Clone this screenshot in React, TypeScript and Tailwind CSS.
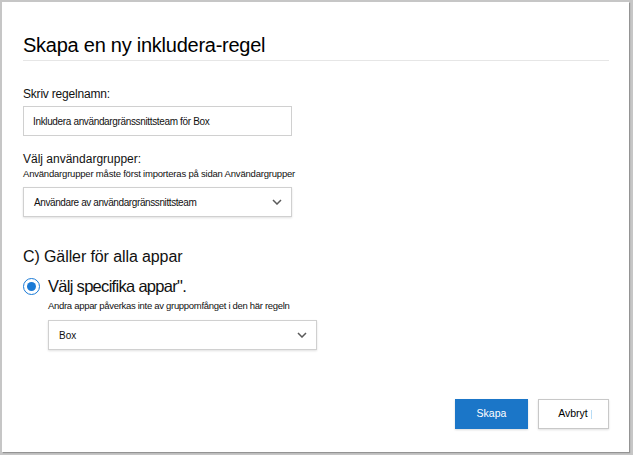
import React from "react";

function Chevron() {
  return (
    <svg width="10" height="6" viewBox="0 0 10 6" className="text-[#5a5a5a]">
      <path d="M1 1 L5 5 L9 1" fill="none" stroke="currentColor" strokeWidth="1.5" />
    </svg>
  );
}

export default function App() {
  return (
    <div className="w-[633px] h-[455px] bg-[#c6c6c6] pt-[2px] pl-[2px] font-['Liberation_Sans',Arial,sans-serif] text-[#111]">
      <div className="w-[627px] h-[450px] bg-white flex flex-col px-[21px] shadow-[1px_1px_1px_rgba(0,0,0,0.25)]">
        <div className="pt-[30px] pb-[2px] border-b border-[#e6e6e6] w-[586px]">
          <h1 className="text-[20px] leading-[26px] tracking-[-0.25px] text-black">Skapa en ny inkludera-regel</h1>
        </div>
        <div className="mt-[25px] text-[12px] leading-[16px] tracking-[-0.2px]">Skriv regelnamn:</div>
        <div className="mt-[4px] w-[269px] h-[30px] border border-[#d0d0d0] flex items-center pl-[9px] text-[10px] tracking-[-0.35px]">
          Inkludera användargränssnittsteam för Box
        </div>
        <div className="mt-[15px] text-[12px] leading-[16px]">Välj användargrupper:</div>
        <div className="mt-[1px] text-[9.5px] leading-[12px] tracking-[-0.2px]">Användargrupper måste först importeras på sidan Användargrupper</div>
        <div className="mt-[7px] w-[269px] h-[30px] border border-[#d0d0d0] shadow-[0_1px_2px_rgba(0,0,0,0.12)] flex items-center justify-between pl-[10px] pr-[9px] text-[10px] tracking-[-0.4px]">
          <span>Användare av användargränssnittsteam</span>
          <Chevron />
        </div>
        <div className="mt-[30px] text-[16px] leading-[20px] tracking-[-0.1px]">C) Gäller för alla appar</div>
        <div className="mt-[9px] h-[20px] flex items-center">
          <div className="w-[17px] h-[17px] rounded-full border-[1.5px] border-[#1a7ad6] flex items-center justify-center">
            <div className="w-[9px] h-[9px] rounded-full bg-[#1a7ad6]" />
          </div>
          <span className="ml-[8px] text-[16.5px] leading-[20px] tracking-[-0.7px]">Välj specifika appar".</span>
        </div>
        <div className="ml-[25px] mt-[4px] text-[9.5px] leading-[12px] tracking-[-0.3px]">Andra appar påverkas inte av gruppomfånget i den här regeln</div>
        <div className="ml-[25px] mt-[8px] w-[269px] h-[30px] border border-[#d0d0d0] shadow-[0_1px_2px_rgba(0,0,0,0.12)] flex items-center justify-between pl-[10px] pr-[9px] text-[10px]">
          <span>Box</span>
          <Chevron />
        </div>
        <div className="mt-[49px] flex justify-end gap-[10px] w-[586px]">
          <button className="w-[73px] h-[30px] bg-[#1b76c8] text-white text-[10.5px] shadow-[0_1px_2px_rgba(0,0,0,0.15)]">Skapa</button>
          <button className="w-[71px] h-[30px] bg-white border border-[#c8c8c8] text-[10.5px] text-black shadow-[0_1px_2px_rgba(0,0,0,0.12)] flex items-center justify-center pl-[3px]">
            <span>Avbryt</span>
            <span className="ml-[3px] w-px h-[9px] bg-[#b8dcf5]" />
          </button>
        </div>
      </div>
    </div>
  );
}
